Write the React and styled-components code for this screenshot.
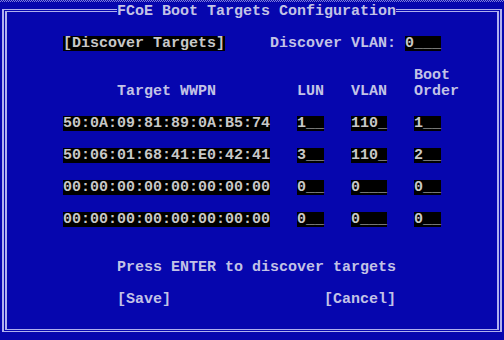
import React from "react";
import styled, { createGlobalStyle } from "styled-components";

const BLUE = "#0606ae";
const TEXT = "#c2c2e6";
const LINE = "#b0b0ee";

const GlobalStyle = createGlobalStyle`
  html, body {
    margin: 0;
    padding: 0;
    background: ${BLUE};
  }
  body {
    width: 504px;
    height: 340px;
    overflow: hidden;
  }
`;

const Screen = styled.div`
  width: 504px;
  height: 340px;
  box-sizing: border-box;
  padding-left: 2px;
  background: ${BLUE};
  color: ${TEXT};
  font-family: "Liberation Mono", "DejaVu Sans Mono", monospace;
  font-size: 15px;
  font-weight: bold;
  line-height: 16px;
  white-space: pre;
`;

// leftover scanline of the row above the dialog
const Dither = styled.div`
  height: 2px;
  margin: 0 0 7px -2px;
  background: conic-gradient(#7e7ed8 25%, ${BLUE} 0 50%, #7e7ed8 0 75%, ${BLUE} 0) 0 0 / 2px 2px;
`;

const Frame = styled.div`
  position: relative;
  width: 500px;
  height: 323px;
  box-sizing: border-box;
  border-style: solid;
  border-color: ${LINE};
  border-width: 1px 2px;
  padding: 1px;
`;

const Panel = styled.div`
  height: 100%;
  box-sizing: border-box;
  border-style: solid;
  border-color: ${LINE};
  border-width: 1px 2px;
  padding: 24px 0 0 56px;
  display: flex;
  flex-direction: column;
`;

const Title = styled.div`
  position: absolute;
  top: -6px;
  left: 113px;
  height: 16px;
  background: ${BLUE};
`;

const Line = styled.div`
  display: flex;
  height: 16px;
  margin-top: ${p => p.$gap || 0}px;
  padding-left: ${p => p.$indent || 0}ch;
  gap: ${p => p.$spread || 0}ch;
`;

const Field = styled.span`
  display: inline-block;
  height: 15px;
  background: #000;
  color: #c8c8c8;
  align-self: flex-start;
`;

const Table = styled.div`
  display: grid;
  grid-template-columns: 26ch 6ch 7ch auto;
  row-gap: 16px;
  margin-top: 16px;
  align-items: end;
`;

const Heading = styled.div`
  padding-left: ${p => p.$indent || 0}ch;
`;

const Cell = styled.div`
  display: flex;
  height: 16px;
`;

const targets = [
  { wwpn: "50:0A:09:81:89:0A:B5:74", lun: "1__", vlan: "110_", order: "1__" },
  { wwpn: "50:06:01:68:41:E0:42:41", lun: "3__", vlan: "110_", order: "2__" },
  { wwpn: "00:00:00:00:00:00:00:00", lun: "0__", vlan: "0___", order: "0__" },
  { wwpn: "00:00:00:00:00:00:00:00", lun: "0__", vlan: "0___", order: "0__" },
];

export default function App() {
  return (
    <>
      <GlobalStyle />
      <Screen>
        <Dither />
        <Frame>
          <Title>FCoE Boot Targets Configuration</Title>
          <Panel>
            <Line $spread={5}>
              <Field>[Discover Targets]</Field>
              <span>
                Discover VLAN: <Field>0___</Field>
              </span>
            </Line>

            <Table>
              <Heading $indent={6}>Target WWPN</Heading>
              <Heading>LUN</Heading>
              <Heading>VLAN</Heading>
              <Heading>{"Boot\nOrder"}</Heading>
              {targets.map((t, i) => (
                <React.Fragment key={i}>
                  <Cell><Field>{t.wwpn}</Field></Cell>
                  <Cell><Field>{t.lun}</Field></Cell>
                  <Cell><Field>{t.vlan}</Field></Cell>
                  <Cell><Field>{t.order}</Field></Cell>
                </React.Fragment>
              ))}
            </Table>

            <Line $gap={32} $indent={6}>Press ENTER to discover targets</Line>
            <Line $gap={16} $indent={6} $spread={17}>
              <span>[Save]</span>
              <span>[Cancel]</span>
            </Line>
          </Panel>
        </Frame>
      </Screen>
    </>
  );
}
